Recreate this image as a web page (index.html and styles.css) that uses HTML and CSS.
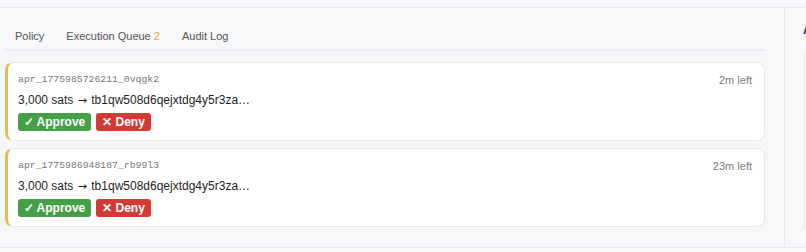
FILE: index.html
```html
<!DOCTYPE html>
<html>
<head>
<meta charset="utf-8">
<link rel="stylesheet" href="styles.css">
</head>
<body>
<div class="topbar"></div>
<div class="layout">
  <main class="main">
    <nav class="tabs">
      <span class="tab">Policy</span>
      <span class="tab active">Execution Queue <span class="count">2</span></span>
      <span class="tab">Audit Log</span>
    </nav>
    <div class="queue">
      <div class="card">
        <div class="card-head">
          <span class="req-id">apr_1775985726211_0vqgk2</span>
          <span class="time-left">2m left</span>
        </div>
        <div class="summary">3,000 sats <span class="arrow">→</span> tb1qw508d6qejxtdg4y5r3za…</div>
        <div class="actions">
          <button class="btn approve">✓ Approve</button>
          <button class="btn deny">✕ Deny</button>
        </div>
      </div>
      <div class="card">
        <div class="card-head">
          <span class="req-id">apr_1775986948187_rb99l3</span>
          <span class="time-left">23m left</span>
        </div>
        <div class="summary">3,000 sats <span class="arrow">→</span> tb1qw508d6qejxtdg4y5r3za…</div>
        <div class="actions">
          <button class="btn approve">✓ Approve</button>
          <button class="btn deny">✕ Deny</button>
        </div>
      </div>
    </div>
  </main>
  <aside class="sidebar">
    <h3 class="side-title">Activity</h3>
    <div class="side-card"></div>
  </aside>
</div>
<div class="footer"></div>
</body>
</html>
```

FILE: styles.css
```css
* { box-sizing: border-box; }
html, body { margin: 0; padding: 0; }
body {
  background: #f6f7f9;
  font-family: "Liberation Sans", Arial, sans-serif;
  color: #222;
  width: 806px;
  height: 252px;
  overflow: hidden;
}
.topbar {
  height: 8px;
  border-bottom: 1px solid #e8eaed;
}
.layout {
  display: grid;
  grid-template-columns: 785px 1fr;
  height: 239px;
}
.main {
  border-right: 1px solid #e8eaed;
  padding: 0 19px 0 5px;
}
.tabs {
  display: flex;
  height: 43px;
  align-items: center;
  padding-top: 14px;
  padding-left: 10px;
  gap: 22px;
  border-bottom: 2px solid #eceef1;
}
.tab {
  font-size: 11px;
  color: #555;
}
.count { color: #e0a82e; }
.queue {
  display: flex;
  flex-direction: column;
  gap: 7px;
  margin-top: 11px;
}
.card {
  background: #fff;
  border: 1px solid #e6e8eb;
  border-left: 3px solid #e6bd4c;
  border-radius: 8px;
  padding: 10px 12px 8px 10px;
  height: 79px;
}
.card-head {
  display: flex;
  justify-content: space-between;
  align-items: center;
  height: 13px;
}
.req-id {
  font-family: "Liberation Mono", "DejaVu Sans Mono", monospace;
  font-size: 9.8px;
  color: #777;
}
.time-left {
  font-size: 11px;
  color: #7b7b7b;
}
.summary {
  font-size: 12px;
  margin-top: 7px;
  height: 14px;
  line-height: 14px;
  color: #1f1f1f;
}
.arrow {
  font-family: "DejaVu Sans", sans-serif;
  font-size: 11px;
  margin: 0 1px;
}
.actions {
  display: flex;
  gap: 5px;
  margin-top: 6px;
}
.btn {
  border: none;
  border-radius: 3px;
  color: #fff;
  font-family: "Liberation Sans", Arial, sans-serif;
  font-weight: bold;
  font-size: 12px;
  height: 18px;
  padding: 0;
}
.approve { background: #43a047; width: 73px; }
.deny { background: #d33a36; width: 55px; }
.sidebar {
  padding: 0 0 0 18px;
}
.side-title {
  margin: 15px 0 0;
  font-size: 12px;
  font-weight: bold;
  color: #333;
  line-height: 14px;
}
.side-card {
  margin-top: 15px;
  margin-left: 1px;
  height: 180px;
  background: #fff;
  border: 1px solid #e6e8eb;
  border-radius: 6px;
}
.footer {
  border-top: 1px solid #e8eaed;
  height: 5px;
}
```
